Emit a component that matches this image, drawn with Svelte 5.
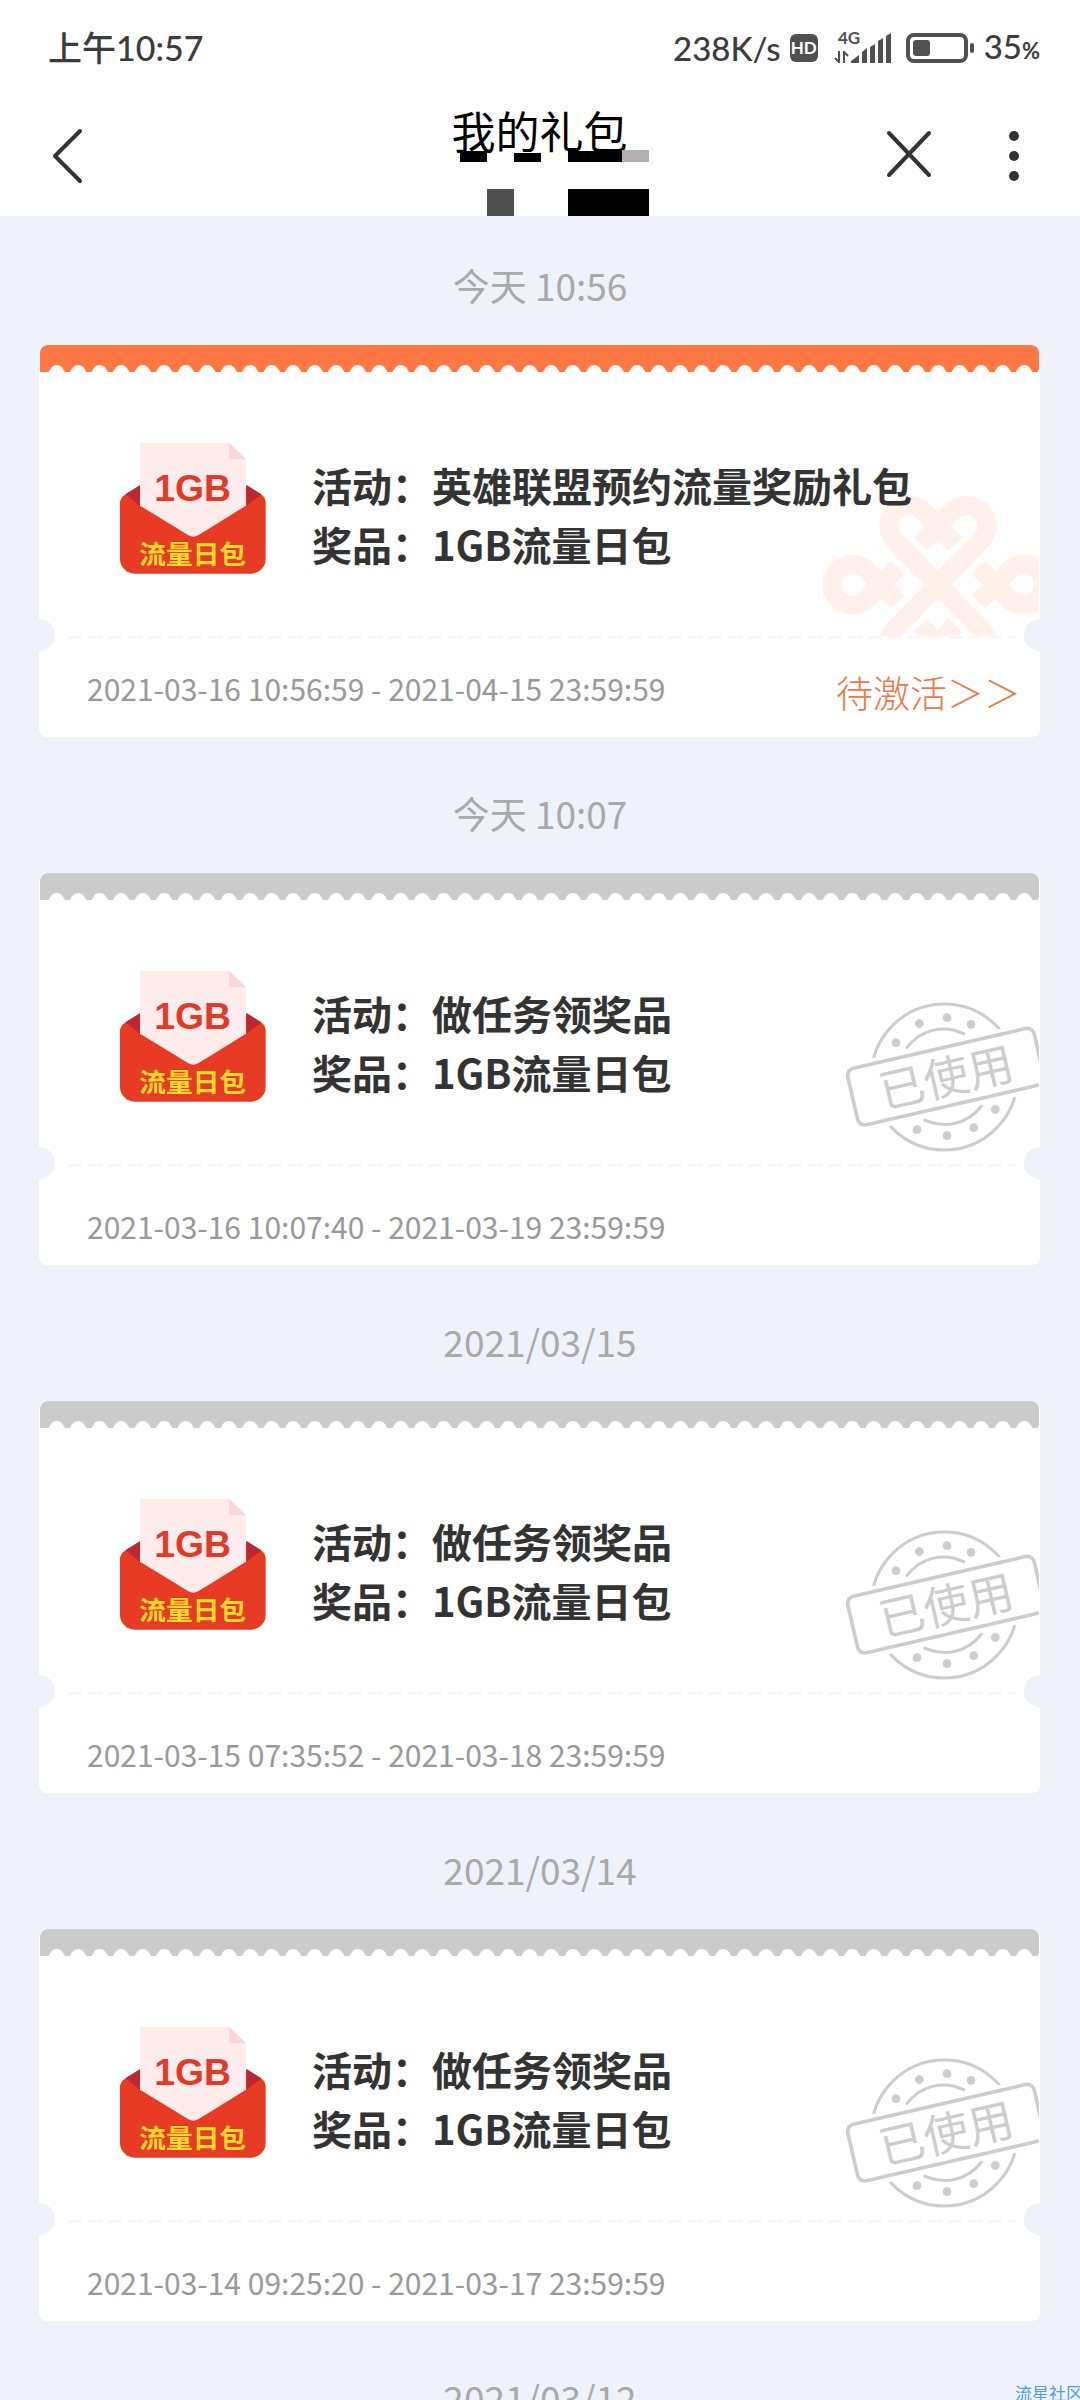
<script lang="ts">
  type Gift = {
    label: string;
    activity: string;
    prize: string;
    period: string;
    active: boolean;
  };

  const gifts: Gift[] = [
    { label: '今天 10:56', activity: '英雄联盟预约流量奖励礼包', prize: '1GB流量日包', period: '2021-03-16 10:56:59 - 2021-04-15 23:59:59', active: true },
    { label: '今天 10:07', activity: '做任务领奖品', prize: '1GB流量日包', period: '2021-03-16 10:07:40 - 2021-03-19 23:59:59', active: false },
    { label: '2021/03/15', activity: '做任务领奖品', prize: '1GB流量日包', period: '2021-03-15 07:35:52 - 2021-03-18 23:59:59', active: false },
    { label: '2021/03/14', activity: '做任务领奖品', prize: '1GB流量日包', period: '2021-03-14 09:25:20 - 2021-03-17 23:59:59', active: false }
  ];
  const nextLabel = '2021/03/12';
</script>

<div class="screen">
  <div class="status">
    <span class="clock">上午10:57</span>
    <div class="indicators">
      <span class="speed">238K/s</span>
      <span class="hd">HD</span>
      <svg class="signal" width="58" height="44" viewBox="0 -6 58 44" aria-hidden="true">
        <text x="4" y="12" class="net">4G</text>
        <path d="M5 19V31M5 30L1 26M10 31V19M10 20L14 24" fill="none" stroke="#505050" stroke-width="2" />
        <path d="M17 31v-2l8-6v8zM28 31V20l5-4v15zM36 31V15l5-3v19zM44 31V9l5-3v25zM52 31V4l5-3v30z" fill="#505050" />
      </svg>
      <svg class="battery" width="69" height="32" viewBox="0 0 69 32" aria-hidden="true">
        <rect x="2" y="3" width="58" height="26" rx="6" fill="none" stroke="#505050" stroke-width="4" />
        <rect x="7" y="8" width="17" height="16" rx="3" fill="#505050" />
        <rect x="64" y="11" width="4" height="10" rx="2" fill="#505050" />
      </svg>
      <span class="level">35<small>%</small></span>
    </div>
  </div>

  <header class="nav">
    <button class="icon back" aria-label="返回">
      <svg width="32" height="56" viewBox="0 0 32 56"><path d="M29 3L4 28l25 25" fill="none" stroke="#333" stroke-width="4" stroke-linecap="round" stroke-linejoin="round" /></svg>
    </button>
    <div class="title">
      <h1>我的礼包</h1>
      <svg class="blocks" width="189" height="66" viewBox="0 0 189 66" aria-hidden="true">
        <path d="M0 1h27v11H0zM54 3h27v9H54zM108 1h54v11h-54zM108 39h81v27h-81z" fill="#000" />
        <path d="M162 0h27v12h-27z" fill="#b0b0b0" />
        <path d="M27 39h27v27H27z" fill="#4f4f4f" />
      </svg>
    </div>
    <div class="actions">
      <button class="icon" aria-label="关闭">
        <svg width="48" height="54" viewBox="0 0 48 54"><path d="M4 4l40 42M44 4L4 46" fill="none" stroke="#333" stroke-width="4" stroke-linecap="round" /></svg>
      </button>
      <button class="icon" aria-label="更多">
        <svg width="12" height="54" viewBox="0 0 12 54"><g fill="#333"><circle cx="6" cy="7" r="5" /><circle cx="6" cy="27" r="5" /><circle cx="6" cy="47" r="5" /></g></svg>
      </button>
    </div>
  </header>

  <main>
    {#each gifts as gift}
      <section>
        <h2>{gift.label}</h2>
        <article class="card" class:active={gift.active}>
          <svg class="edge" width="100%" height="27" aria-hidden="true">
            <defs>
              <pattern id={gift.active ? 'wave-on' : 'wave-off'} x="6" width="21.500" height="28" patternUnits="userSpaceOnUse">
                <path d="M0 0H21.500V27H19C17.500 25 16 20 10.700 20S4 25 2.500 27H0z" fill={gift.active ? '#ff7743' : '#cbcbcb'} />
              </pattern>
            </defs>
            <rect width="6" height="27" fill={gift.active ? '#ff7743' : '#cbcbcb'} />
            <rect x="6" width="100%" height="28" fill={gift.active ? 'url(#wave-on)' : 'url(#wave-off)'} />
          </svg>

          {#if gift.active}
            <svg class="knot" width="220" height="143" viewBox="180 100 660 429" aria-hidden="true">
              <defs>
                <g id="upper">
                  <path d="M485 250L577 156A61 61 0 1 1 663 242L535 374" />
                  <path d="M589 250L497 156A61 61 0 1 0 411 242L539 374" />
                </g>
              </defs>
              <g fill="none" stroke="#fff0eb" stroke-width="57">
                <use href="#upper" />
                <use href="#upper" transform="translate(0 744) scale(1 -1)" />
                <path d="M415 320L324 415A61 61 0 1 1 324 329L415 424" />
                <path d="M659 320L750 415A61 61 0 1 0 750 329L659 424" />
              </g>
            </svg>
          {:else}
            <svg class="stamp" width="195" height="152" viewBox="132 122 585 456" role="img" aria-label="已使用">
              <g fill="none" stroke="#cdcdcd" stroke-width="9">
                <circle cx="433" cy="350" r="219" />
                <path d="M318 265C360 208 430 190 495 222M370 478C430 504 500 497 547 434" />
              </g>
              <g fill="#cdcdcd">
                <circle cx="288" cy="247" r="13" /><circle cx="358" cy="190" r="13" /><circle cx="441" cy="172" r="13" /><circle cx="513" cy="192" r="13" />
                <circle cx="351" cy="508" r="13" /><circle cx="441" cy="526" r="13" /><circle cx="521" cy="502" r="13" /><circle cx="586" cy="447" r="13" />
              </g>
              <g transform="rotate(-13 438 350)">
                <rect x="120" y="245" width="636" height="210" fill="#fff" />
                <rect x="151" y="262" width="574" height="174" rx="22" fill="#fff" stroke="#cdcdcd" stroke-width="11" />
                <text x="438" y="401" text-anchor="middle" class="used">已使用</text>
              </g>
            </svg>
          {/if}

          <div class="body">
            <svg class="envelope" width="146" height="132" viewBox="90 67 438 396" role="img" aria-label="1GB流量日包">
              <path d="M150 197L105 225Q90 235 90 250V417a45 45 0 0 0 45 45H482a45 45 0 0 0 45-45V250Q527 235 515 225L470 197z" fill="#e83b26" />
              <path d="M150 197L106 224L150 258zM470 197L514 224L470 258z" fill="#bd2732" />
              <path d="M150 75q0-6 6-6H417L468 119V258L326 346q-16 10-32 0L150 258z" fill="#ffebeb" />
              <path d="M417 69L468 119H417z" fill="#fbd8d6" />
              <text x="308" y="243" text-anchor="middle" class="size">1GB</text>
              <text x="308" y="434" text-anchor="middle" class="kind">流量日包</text>
            </svg>
            <div class="info">
              <p>活动：{gift.activity}</p>
              <p>奖品：{gift.prize}</p>
            </div>
          </div>

          <div class="perforation"></div>

          <footer>
            <time>{gift.period}</time>
            {#if gift.active}<a href="#activate">待激活＞＞</a>{/if}
          </footer>
        </article>
      </section>
    {/each}
    <section><h2>{nextLabel}</h2></section>
  </main>
  <span class="mark">流星社区</span>
</div>

<style>
  :global(body) { background: #eff2fa; }
  .screen {
    position: relative;
    display: flex;
    flex-direction: column;
    height: 100vh;
    overflow: hidden;
    background: #eff2fa;
    font-family: "Noto Sans CJK SC", sans-serif;
  }
  h1, h2, p { margin: 0; font-weight: 400; }
  svg { display: block; flex: none; }

  .status {
    display: flex;
    align-items: center;
    justify-content: space-between;
    height: 96px;
    padding: 0 40px 0 48px;
    box-sizing: border-box;
    background: #fff;
    color: #3c3c3c;
    font: 500 34px/40px Lato, "Noto Sans CJK SC", sans-serif;
    flex: none;
  }
  .indicators { display: flex; align-items: center; }
  .speed { font-size: 33px; }
  .hd {
    width: 28px;
    margin: 0 16px 0 9px;
    border-radius: 6px;
    background: #505050;
    color: #fff;
    font: 700 17px/28px Lato, sans-serif;
    text-align: center;
  }
  .net { font: 700 17px Lato, sans-serif; fill: #505050; }
  .battery { margin: 0 9px 0 14px; }
  .level { font-size: 33px; }
  .level small { font-size: 22px; font-weight: 700; }

  .nav {
    display: grid;
    grid-template-columns: 1fr auto 1fr;
    align-items: center;
    height: 120px;
    padding: 0 60px 0 51px;
    box-sizing: border-box;
    background: #fff;
    flex: none;
  }
  .icon { padding: 0; border: 0; background: none; }
  .back { justify-self: start; }
  .title { position: relative; height: 120px; padding-left: 8px; }
  h1 { padding-top: 8px; color: #000; font-size: 44px; line-height: 52px; }
  .blocks { position: absolute; left: 16px; bottom: 0; }
  .actions { display: flex; align-items: center; justify-content: flex-end; gap: 75px; }

  main {
    display: flex;
    flex-direction: column;
    gap: 50px;
    flex: 1;
    min-height: 0;
    padding: 43px 40px 0 39px;
    overflow: hidden;
  }
  section { flex: none; }
  h2 {
    margin-bottom: 34px;
    padding-left: 1px;
    color: #a9a9a9;
    font-size: 37px;
    line-height: 52px;
    text-align: center;
  }
  .card {
    position: relative;
    display: flex;
    flex-direction: column;
    height: 392px;
    padding: 0 1px;
    box-sizing: border-box;
    overflow: hidden;
    border-radius: 8px;
    background: #fff;
  }
  .edge { border-radius: 8px 8px 0 0; }
  .knot { position: absolute; right: 1px; top: 149px; }
  .stamp { position: absolute; right: 1px; top: 128px; }
  .used { font-size: 136px; font-weight: 400; fill: #cdcdcd; }
  .body {
    position: relative;
    display: flex;
    gap: 46px;
    height: 232px;
    padding: 70px 40px 0 80px;
    box-sizing: border-box;
  }
  .size { font: 700 112px "Liberation Sans", sans-serif; fill: #e23a29; }
  .kind { font-size: 80px; font-weight: 700; fill: #ffd929; }
  .info { padding-top: 14px; color: #333; font-size: 40px; line-height: 59px; }
  .info p { font-weight: 700; white-space: nowrap; }
  .perforation {
    position: relative;
    height: 3px;
    margin: 32px 24px 0 28px;
    background: repeating-linear-gradient(90deg, #f7f7f7 0 14px, #fff 14px 20px);
    flex: none;
  }
  .perforation::before, .perforation::after {
    content: "";
    position: absolute;
    top: -17px;
    width: 32px;
    height: 32px;
    border-radius: 50%;
    background: #eff2fa;
  }
  .perforation::before { left: -45px; }
  .perforation::after { right: -41px; }
  footer {
    display: flex;
    align-items: center;
    justify-content: space-between;
    height: 98px;
    padding: 20px 18px 0 47px;
    box-sizing: border-box;
  }
  .active footer { padding-top: 0; }
  time { color: #999; font-size: 30px; line-height: 44px; }
  footer a {
    padding-top: 8px;
    color: #ef7744;
    font-size: 37px;
    font-weight: 300;
    line-height: 48px;
    text-decoration: none;
  }
  .mark {
    position: absolute;
    left: calc(100% - 65px);
    top: calc(100% - 18px);
    color: #4a9df0;
    font-size: 17px;
    line-height: 22px;
    white-space: nowrap;
  }
</style>
